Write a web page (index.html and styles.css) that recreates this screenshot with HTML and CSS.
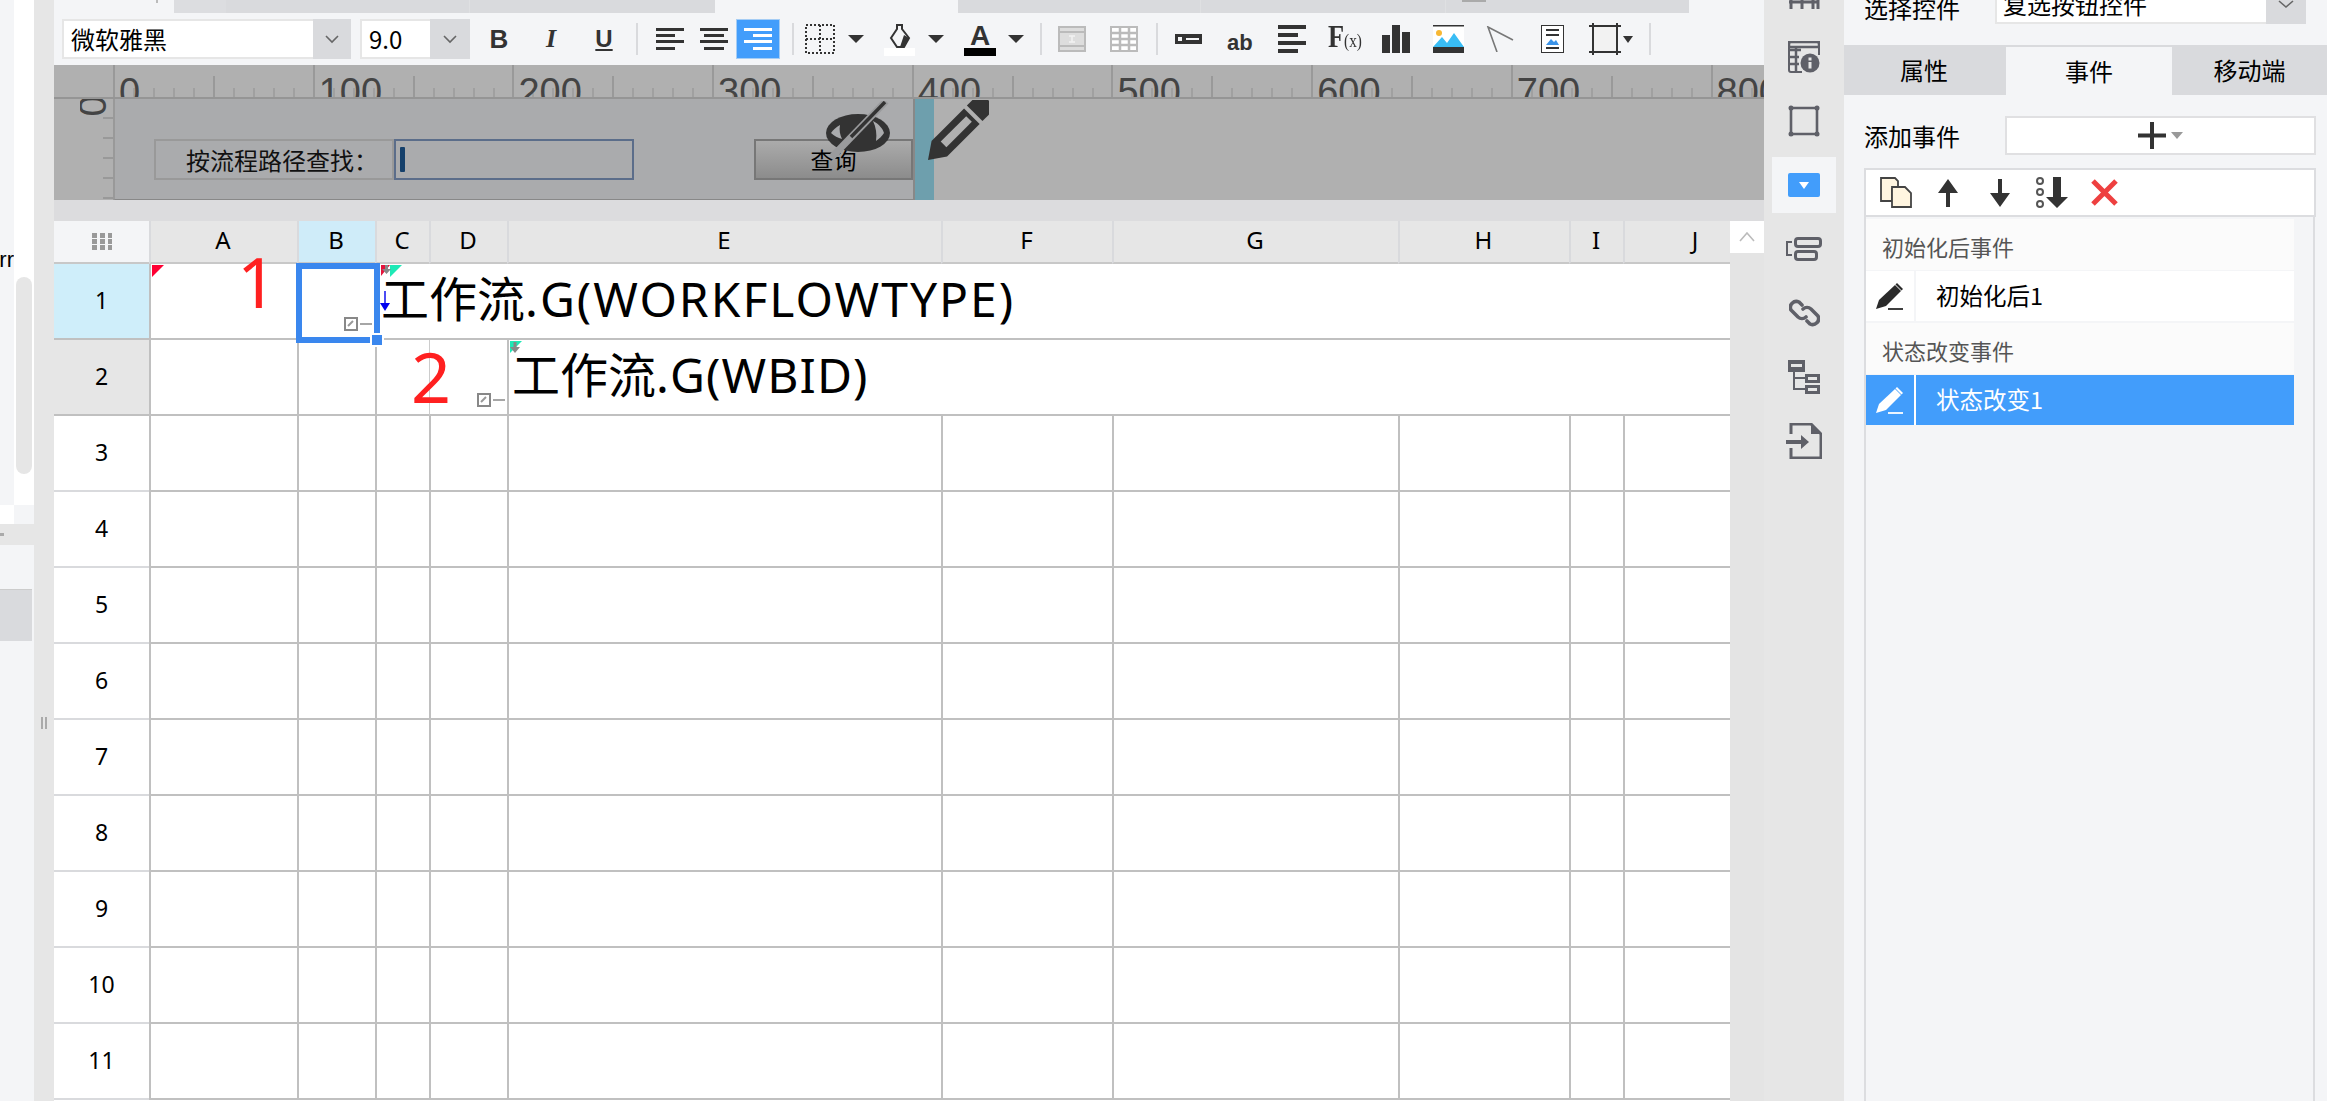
FILE: index.html
```html
<!DOCTYPE html>
<html lang="zh">
<head>
<meta charset="utf-8">
<title>报表设计器</title>
<link rel="stylesheet" href="styles.css">
</head>
<body>
<div class="app">
  <aside class="leftcol">
    <div class="leftpane">
      <div class="lp-top">
        <div class="lp-list"><span class="lp-text">rr</span></div>
        <div class="lp-scroll"><div class="lp-thumb"></div></div>
      </div>
      <div class="lp-mid"><div class="lp-mid-a"></div><div class="lp-mid-b"></div></div>
      <div class="lp-band"><span class="lp-dot"></span></div>
      <div class="lp-rest"><div class="lp-selected"></div></div>
    </div>
    <div class="splitter"><span class="grip"></span><span class="grip"></span></div>
  </aside>

  <main class="center">
    <div class="tabstrip">
      <span class="strip-tick"></span>
      <div class="tabgroup tg1"><span class="seg s1"></span><span class="seg s2"></span><span class="seg s3"></span></div>
      <div class="tabgroup tg2"><span class="seg s4"></span><span class="seg s5"></span><span class="seg s6"></span></div>
    </div>

    <div class="toolbar">
      <div class="select sel-font"><span class="sel-val">微软雅黑</span><span class="sel-arrow"><svg width="14" height="9" viewBox="0 0 14 9"><path d="M1 1l6 6 6-6" fill="none" stroke="#666" stroke-width="1.6"/></svg></span></div>
      <div class="select sel-size"><span class="sel-val">9.0</span><span class="sel-arrow"><svg width="14" height="9" viewBox="0 0 14 9"><path d="M1 1l6 6 6-6" fill="none" stroke="#666" stroke-width="1.6"/></svg></span></div>
      <span class="fmt fmt-b">B</span>
      <span class="fmt fmt-i">I</span>
      <span class="fmt fmt-u">U</span>
      <span class="sep sep-1"></span>
      <svg class="tic ml-18" width="28" height="22" viewBox="0 0 28 22"><path d="M0 0h28v3H0zM0 6h19v3H0zM0 12h28v3H0zM0 19h19v3H0z" fill="#333"/></svg>
      <svg class="tic ml-16" width="28" height="22" viewBox="0 0 28 22"><path d="M0 0h28v3H0zM4 6h20v3H4zM0 12h28v3H0zM4 19h20v3H4z" fill="#333"/></svg>
      <span class="align-active"><svg width="28" height="22" viewBox="0 0 28 22"><path d="M0 0h28v3H0zM9 6h19v3H9zM0 12h28v3H0zM9 19h19v3H9z" fill="#fff"/></svg></span>
      <span class="sep sep-2"></span>
      <svg class="tic ml-11" width="30" height="30" viewBox="0 0 30 30"><path d="M1 1h28v28H1zM1 15h28M15 1v28" fill="none" stroke="#333" stroke-width="2" stroke-dasharray="2 2"/></svg>
      <span class="caret ml-13"></span>
      <span class="fill ml-20"><svg width="22" height="24" viewBox="0 0 22 24"><path d="M8 1h5v4l7 9-5 9H8l-6-9 6-9z" fill="none" stroke="#333" stroke-width="2"/><path d="M15 11l5 3-5 9h-4z" fill="#333"/></svg><span class="swatch sw-white"></span></span>
      <span class="caret ml-13"></span>
      <span class="fill fill-a ml-20"><span class="a-glyph">A</span><span class="swatch sw-black"></span></span>
      <span class="caret ml-12"></span>
      <span class="sep sep-3"></span>
      <svg class="tic ml-16" width="28" height="26" viewBox="0 0 28 26"><rect x="1" y="1" width="26" height="24" fill="#ddd" stroke="#bbb" stroke-width="2"/><path d="M1 6h26M1 20h26" stroke="#bbb" stroke-width="2"/><path d="M11 10h6M11 16h6M14 10v6" stroke="#f2f2f2" stroke-width="1.5"/></svg>
      <svg class="tic ml-24" width="28" height="26" viewBox="0 0 28 26"><rect x="1" y="1" width="26" height="24" fill="#fff" stroke="#bbb" stroke-width="2"/><path d="M1 7h26M1 13h26M1 19h26M10 1v24M19 1v24" stroke="#bbb" stroke-width="2.5"/></svg>
      <span class="sep sep-4"></span>
      <svg class="tic ml-17" width="27" height="10" viewBox="0 0 27 10"><path d="M0 0h27v10H0z" fill="#333"/><path d="M3 3h4v4H3zM11 4h13v2H11z" fill="#f4f5f7"/></svg>
      <span class="ab ml-25">ab</span>
      <svg class="tic ml-25" width="28" height="28" viewBox="0 0 28 28"><path d="M0 0h28v4H0zM0 8h20v4H0zM0 16h28v4H0zM0 24h20v4H0z" fill="#333"/></svg>
      <span class="fx ml-22">F<small class="fx-x">(x)</small></span>
      <svg class="tic ml-21" width="28" height="28" viewBox="0 0 28 28"><path d="M0 10h8v18H0zM10 0h8v28h-8zM20 7h8v21h-8z" fill="#333"/></svg>
      <svg class="tic ml-23" width="31" height="28" viewBox="0 0 31 28"><path d="M0 0h31v28H0z" fill="#333"/><path d="M0 1.500h31V22H0z" fill="#fff"/><circle cx="6" cy="8" r="3" fill="#f7b733"/><path d="M0 22l9-10 5 6 7-10 10 14z" fill="#39bdf5"/></svg>
      <svg class="tic ml-22" width="28" height="26" viewBox="0 0 28 26"><path d="M27 14L2 1l9 25" fill="none" stroke="#777" stroke-width="1.600"/></svg>
      <svg class="tic ml-27" width="23" height="28" viewBox="0 0 23 28"><rect x=".5" y=".5" width="22" height="27" fill="#fff" stroke="#333"/><path d="M5 4h13v2H5zM5 9h13v2H5zM5 22h13v2H5z" fill="#333"/><path d="M5 20l5-6 3 3 2-2 3 5z" fill="#3b93e8"/></svg>
      <svg class="tic ml-25" width="32" height="32" viewBox="0 0 32 32"><path d="M4 3h24v26H4z" fill="#f2f2f2" stroke="#333" stroke-width="2"/><path d="M0 3h8M24 3h8M0 29h8M24 29h8M4 0v6M28 0v6M4 26v6M28 26v6" stroke="#333" stroke-width="2"/></svg>
      <span class="caret caret-sm"></span>
      <span class="sep sep-5"></span>
    </div>

    <section class="canvas">
      <div class="ruler">
        <span class="rcell"><b class="rnum">0</b></span><span class="rcell"><b class="rnum">100</b></span><span class="rcell"><b class="rnum">200</b></span><span class="rcell"><b class="rnum">300</b></span><span class="rcell"><b class="rnum">400</b></span><span class="rcell"><b class="rnum">500</b></span><span class="rcell"><b class="rnum">600</b></span><span class="rcell"><b class="rnum">700</b></span><span class="rcell"><b class="rnum">800</b></span>
      </div>
      <div class="stage">
        <div class="vruler"><span class="vnum">0</span></div>
        <div class="design">
          <div class="formlabel">按流程路径查找：</div>
          <div class="forminput"><span class="input-caret"></span></div>
          <div class="formbtn">查询</div>
          <svg class="eye" width="64" height="58" viewBox="0 0 64 58"><ellipse cx="32" cy="32" rx="32" ry="19" fill="#333"/><path d="M5 32c2-3 5-6 9-8-1 5 0 10 2 14-4-1-8-3-11-6z" fill="#aaabad"/><path d="M47 20c6 3 10 8 11 12-2 3-5 6-8 8 1-7 0-14-3-20z" fill="#aaabad"/><path d="M60 0L6 56" stroke="#9a9b9d" stroke-width="7"/><path d="M59 1L25 36" stroke="#333" stroke-width="3.500"/></svg>
        </div>
        <div class="teal"></div>
        <svg class="pencil" width="62" height="62" viewBox="0 0 62 62"><g transform="translate(1 60) rotate(-45)"><path d="M0 0l16-11h46v22H16z" fill="#333"/><path d="M22-4h36v8H22z" fill="#b0b0b0"/><path d="M66-11h8a11 11 0 010 22h-8z" fill="#333"/></g></svg>
      </div>
    </section>

    <div class="gapbar"></div>

    <section class="sheetwrap">
      <div class="sheet">
        <div class="corner"><span class="cgrip"></span></div>
        <div class="ch">A</div><div class="ch ch-on">B</div><div class="ch">C</div><div class="ch">D</div><div class="ch">E</div><div class="ch">F</div><div class="ch">G</div><div class="ch">H</div><div class="ch">I</div><div class="ch">J</div>

        <div class="rh rh-on">1</div><div class="c"></div><div class="c"></div>
        <div class="c span8"><span class="bigtext t-c1">工作流<span class="lat-1">.G(WORKFLOWTYPE)</span></span></div>

        <div class="rh rh-two">2</div><div class="c"></div><div class="c"></div><div class="c"></div><div class="c c-thin"></div>
        <div class="c span6"><span class="bigtext t-e2">工作流<span class="lat-2">.G(WBID)</span></span></div>

        <div class="rh">3</div><div class="c"></div><div class="c"></div><div class="c"></div><div class="c"></div><div class="c"></div><div class="c"></div><div class="c"></div><div class="c"></div><div class="c"></div><div class="c"></div>
        <div class="rh">4</div><div class="c"></div><div class="c"></div><div class="c"></div><div class="c"></div><div class="c"></div><div class="c"></div><div class="c"></div><div class="c"></div><div class="c"></div><div class="c"></div>
        <div class="rh">5</div><div class="c"></div><div class="c"></div><div class="c"></div><div class="c"></div><div class="c"></div><div class="c"></div><div class="c"></div><div class="c"></div><div class="c"></div><div class="c"></div>
        <div class="rh">6</div><div class="c"></div><div class="c"></div><div class="c"></div><div class="c"></div><div class="c"></div><div class="c"></div><div class="c"></div><div class="c"></div><div class="c"></div><div class="c"></div>
        <div class="rh">7</div><div class="c"></div><div class="c"></div><div class="c"></div><div class="c"></div><div class="c"></div><div class="c"></div><div class="c"></div><div class="c"></div><div class="c"></div><div class="c"></div>
        <div class="rh">8</div><div class="c"></div><div class="c"></div><div class="c"></div><div class="c"></div><div class="c"></div><div class="c"></div><div class="c"></div><div class="c"></div><div class="c"></div><div class="c"></div>
        <div class="rh">9</div><div class="c"></div><div class="c"></div><div class="c"></div><div class="c"></div><div class="c"></div><div class="c"></div><div class="c"></div><div class="c"></div><div class="c"></div><div class="c"></div>
        <div class="rh">10</div><div class="c"></div><div class="c"></div><div class="c"></div><div class="c"></div><div class="c"></div><div class="c"></div><div class="c"></div><div class="c"></div><div class="c"></div><div class="c"></div>
        <div class="rh">11</div><div class="c"></div><div class="c"></div><div class="c"></div><div class="c"></div><div class="c"></div><div class="c"></div><div class="c"></div><div class="c"></div><div class="c"></div><div class="c"></div>

        <span class="tri tri-red t1"></span>
        <span class="tri tri-crimson t2"></span>
        <span class="tri tri-teal t3"></span>
        <span class="tri tri-teal t4"></span>
        <svg class="minidown d1" width="9" height="9" viewBox="0 0 9 9"><path d="M3 0h3v4h3L4.500 9 0 4h3z" fill="#888"/></svg>
        <svg class="minidown d2" width="10" height="11" viewBox="0 0 10 11"><path d="M3.500 0h3v5H10l-5 6-5-6h3.500z" fill="#888"/></svg>
        <svg class="bluearrow" width="10" height="20" viewBox="0 0 10 20"><path d="M4.300 0h1.400v12H10l-5 8-5-8h4.300z" fill="#0000ee"/></svg>
        <span class="mark mark-1">1</span>
        <span class="mark mark-2">2</span>
        <span class="chk chk-1"><svg width="28" height="14" viewBox="0 0 28 14"><rect x="1" y="1" width="12" height="12" fill="#fff" stroke="#888" stroke-width="2"/><path d="M4 9l5-5" stroke="#999" stroke-width="2"/><path d="M16 7h13" stroke="#888" stroke-width="1.500"/></svg></span>
        <span class="chk chk-2"><svg width="28" height="14" viewBox="0 0 28 14"><rect x="1" y="1" width="12" height="12" fill="#fff" stroke="#888" stroke-width="2"/><path d="M4 9l5-5" stroke="#999" stroke-width="2"/><path d="M16 7h13" stroke="#888" stroke-width="1.500"/></svg></span>
        <div class="selbox"></div>
        <div class="selhandle"></div>
      </div>
      <div class="vscroll">
        <div class="vs-up"><svg width="16" height="10" viewBox="0 0 16 10"><path d="M1 9l7-8 7 8" fill="none" stroke="#bbb" stroke-width="1.600"/></svg></div>
      </div>
    </section>
  </main>

  <nav class="sidebar">
    <div class="side-i"><svg width="32" height="32" viewBox="0 0 32 32"><path d="M3 20v12M14 20v12M25 20v12M30 20v12M1 25h30" stroke="#5f6068" stroke-width="3" fill="none"/></svg></div>
    <div class="side-i"><svg width="32" height="32" viewBox="0 0 32 32"><path d="M14 31H3a2 2 0 01-2-2V3a2 2 0 012-2h26a2 2 0 012 2v11" fill="none" stroke="#5f6068" stroke-width="2"/><path d="M1 1h30v5H1zM1 9h12M1 16h10M1 23h10M8 6v25" fill="none" stroke="#5f6068" stroke-width="2.500"/><circle cx="22" cy="22" r="9.500" fill="#5f6068"/><path d="M20.500 16.500h3v3h-3zM20.500 21h3v6.500h-3z" fill="#e6e6e6"/></svg></div>
    <div class="side-i"><svg width="32" height="32" viewBox="0 0 32 32"><path d="M3 3h26v26H3z" fill="none" stroke="#5f6068" stroke-width="2.600"/><circle cx="3" cy="3" r="2.500" fill="#5f6068"/><circle cx="29" cy="3" r="2.500" fill="#5f6068"/><circle cx="3" cy="29" r="2.500" fill="#5f6068"/><circle cx="29" cy="29" r="2.500" fill="#5f6068"/></svg></div>
    <div class="side-i side-on"><span class="blue-dd"><span class="blue-tri"></span></span></div>
    <div class="side-i"><svg width="36" height="24" viewBox="0 0 36 24"><path d="M6 5H1v13h5" fill="none" stroke="#5f6068" stroke-width="2"/><rect x="9.500" y="1.500" width="25" height="8" rx="2.500" fill="none" stroke="#5f6068" stroke-width="3"/><rect x="9.500" y="14.500" width="21" height="8" rx="2.500" fill="none" stroke="#5f6068" stroke-width="3"/></svg></div>
    <div class="side-i"><svg width="31" height="32" viewBox="0 0 31 32"><path d="M13 8l-3-3a6 6 0 00-8 8l7 7a6 6 0 008 0M18 24l3 3a6 6 0 008-8l-7-7a6 6 0 00-8 0" fill="none" stroke="#5f6068" stroke-width="3.600" stroke-linecap="round"/></svg></div>
    <div class="side-i"><svg width="32" height="34" viewBox="0 0 32 34"><path d="M0 0h17v12H0zM17 14h15v9H17zM17 25h15v9H17z" fill="#5f6068"/><path d="M3 4h11v3H3zM20 17h9v3h-9zM20 28h9v3h-9z" fill="#e6e6e6"/><path d="M6 12v17h11M6 18h11" stroke="#5f6068" stroke-width="2" fill="none"/></svg></div>
    <div class="side-i"><svg width="36" height="36" viewBox="0 0 36 36"><path d="M5 11V1h20l10 10v24H5V25" fill="none" stroke="#5f6068" stroke-width="3"/><path d="M25 1v10h10z" fill="#5f6068"/><path d="M0 17h15v-5l8 7-8 7v-5H0z" fill="#5f6068"/></svg></div>
  </nav>

  <aside class="panel">
    <div class="p-select">
      <span class="p-label">选择控件</span>
      <div class="select sel-ctrl"><span class="sel-val">复选按钮控件</span><span class="sel-arrow arrow-low"><svg width="16" height="9" viewBox="0 0 16 9"><path d="M1 1l7 6 7-6" fill="none" stroke="#666" stroke-width="1.600"/></svg></span></div>
    </div>
    <div class="p-tabs">
      <div class="p-tab p-t1">属性</div>
      <div class="p-tab p-t2 p-tab-on">事件</div>
      <div class="p-tab p-t3">移动端</div>
    </div>
    <div class="p-add">
      <span class="p-label">添加事件</span>
      <div class="addbtn"><svg width="28" height="27" viewBox="0 0 28 27"><path d="M12 0h4v11.500h12v4H16V27h-4V15.500H0v-4h12z" fill="#333"/></svg><span class="add-caret"></span></div>
    </div>
    <div class="p-tools">
      <svg class="pt-copy" width="32" height="31" viewBox="0 0 32 31"><path d="M1 1h14l3 3v8h-6v12H1z" fill="#fff5e0" stroke="#444" stroke-width="1.800"/><path d="M12 10h13l6 6v14H12z" fill="#fff5e0" stroke="#444" stroke-width="1.800"/></svg>
      <svg class="pt-up" width="20" height="28" viewBox="0 0 20 28"><path d="M10 0l10 14h-8v14H8V14H0z" fill="#333"/></svg>
      <svg class="pt-down" width="20" height="28" viewBox="0 0 20 28"><path d="M10 28L0 14h8V0h4v14h8z" fill="#333"/></svg>
      <svg class="pt-dots" width="32" height="31" viewBox="0 0 32 31"><circle cx="4" cy="4" r="3" fill="none" stroke="#555" stroke-width="2"/><circle cx="4" cy="15" r="3" fill="none" stroke="#555" stroke-width="2"/><circle cx="4" cy="27" r="3" fill="none" stroke="#555" stroke-width="2"/><path d="M21 31L10 20h7V0h8v20h7z" fill="#333"/></svg>
      <svg class="pt-x" width="27" height="27" viewBox="0 0 27 27"><path d="M2 2l23 23M25 2L2 25" stroke="#ee4040" stroke-width="5"/></svg>
    </div>
    <div class="p-list">
      <div class="ev-sec">初始化后事件</div>
      <div class="ev-item">
        <span class="ev-ic"><svg width="28" height="28" viewBox="0 0 28 28"><path d="M0 27l3-9L19 3l6 6L10 24z" fill="#2a2a2a"/><path d="M21 1l6 6-1.500 1.500-6-6z" fill="#2a2a2a"/><path d="M12 27h15" stroke="#2a2a2a" stroke-width="1.800"/></svg></span>
        <span class="ev-name">初始化后1</span>
      </div>
      <div class="ev-sec ev-sec2">状态改变事件</div>
      <div class="ev-item ev-on">
        <span class="ev-ic"><svg width="28" height="28" viewBox="0 0 28 28"><path d="M0 27l3-9L19 3l6 6L10 24z" fill="#fff"/><path d="M21 1l6 6-1.500 1.500-6-6z" fill="#fff"/><path d="M12 27h15" stroke="#fff" stroke-width="1.800"/></svg></span>
        <span class="ev-name">状态改变1</span>
      </div>
    </div>
  </aside>
</div>
</body>
</html>
```

FILE: styles.css
```css
* { box-sizing: border-box; }
html, body { margin: 0; padding: 0; height: 100%; overflow: hidden; background: #f4f5f7; }
body { font-family: "Noto Sans", "Noto Sans CJK SC", sans-serif; color: #000; }

.app { display: flex; width: 2327px; height: 1101px; overflow: hidden; }

/* left column */
.leftcol { display: flex; flex: none; width: 54px; }
.leftpane { width: 34px; display: flex; flex-direction: column; background: #f4f5f7; }
.lp-top { display: flex; height: 505px; }
.lp-list { width: 14px; overflow: hidden; display: flex; justify-content: flex-end; padding-top: 245px; }
.lp-text { font: 22px/30px "Liberation Sans", sans-serif; white-space: nowrap; }
.lp-scroll { width: 20px; background: #fff; padding: 277px 2px 0; }
.lp-thumb { width: 16px; height: 197px; background: #e6e6e6; border-radius: 8px; }
.lp-mid { display: flex; height: 19px; }
.lp-mid-a { width: 14px; background: #fff; }
.lp-mid-b { flex: 1; background: #f4f5f7; }
.lp-band { height: 21px; background: #e6e6e6; display: flex; align-items: center; }
.lp-dot { width: 4px; height: 3px; background: #aaa; }
.lp-rest { flex: 1; padding-top: 44px; }
.lp-selected { width: 32px; height: 52px; background: #d9dadd; border-top: 1px solid #ccc; }
.splitter { width: 20px; background: #e6e6e6; display: flex; justify-content: center; gap: 2px; padding-top: 717px; }
.grip { width: 2px; height: 12px; background: #aaa; }

/* centre */
.center { width: 1710px; flex: none; display: flex; flex-direction: column; }
.tabstrip { height: 13px; display: flex; background: #f4f5f7; }
.strip-tick { width: 2px; height: 3px; margin: 0 16px 0 102px; background: #bbb; flex: none; }
.tabgroup { display: flex; height: 13px; }
.tg1 { width: 541px; }
.tg2 { width: 731px; margin-left: 243px; }
.seg { display: block; height: 13px; background: #d9dadd; }
.s1 { width: 52px; background: #dcdde0; }
.s2 { width: 244px; border-right: 1px solid #dfe0e2; }
.s3 { width: 245px; }
.s4 { width: 243px; border-right: 1px solid #dfe0e2; }
.s5 { width: 245px; border-right: 1px solid #dfe0e2; }
.s6 { width: 243px; background: linear-gradient(#aaa, #aaa) 16px 0 / 24px 2px no-repeat, #d9dadd; }

.toolbar { height: 52px; background: #f4f5f7; display: flex; align-items: center; padding-left: 8px; flex: none; }
.select { display: flex; height: 40px; background: #fff; border: 2px solid #e6e6e6; border-right: 0; font-size: 24px; line-height: 36px; }
.sel-val { flex: 1; padding-left: 7px; white-space: nowrap; overflow: hidden; font-family: "Noto Sans CJK SC", sans-serif; }
.sel-arrow { width: 38px; flex: none; margin: -2px 0; background: #d9dadd; display: flex; align-items: center; justify-content: center; }
.sel-font { width: 289px; }
.sel-size { width: 110px; margin-left: 9px; }
.sel-size .sel-arrow { width: 40px; }
.sel-size .sel-val { padding-left: 7px; }

.fmt { width: 52px; text-align: center; font: 26px/30px "Liberation Sans", sans-serif; color: #333; flex: none; }
.fmt-b { margin-left: 3px; font-weight: 700; }
.fmt-i { font-style: italic; font-family: "Liberation Serif", serif; font-weight: 700; }
.fmt-u { margin-left: 1px; font-size: 24px; font-weight: 700; text-decoration: underline; text-decoration-thickness: 2px; text-underline-offset: 2px; }
.sep { width: 2px; height: 32px; background: #d9dadd; flex: none; }
.sep-1 { margin-left: 6px; }
.sep-2 { margin-left: 12px; }
.sep-3 { margin-left: 16px; }
.sep-4 { margin-left: 18px; }
.sep-5 { margin-left: 16px; }
.tic { flex: none; display: block; }
.ml-11 { margin-left: 11px; }
.ml-12 { margin-left: 12px; }
.ml-13 { margin-left: 13px; }
.ml-16 { margin-left: 16px; }
.ml-17 { margin-left: 17px; }
.ml-18 { margin-left: 18px; }
.ml-20 { margin-left: 20px; }
.ml-21 { margin-left: 21px; }
.ml-22 { margin-left: 22px; }
.ml-23 { margin-left: 23px; }
.ml-24 { margin-left: 24px; }
.ml-25 { margin-left: 25px; }
.ml-27 { margin-left: 27px; }
.align-active { width: 44px; height: 40px; margin-left: 8px; background: #429dfb; border: 1px solid #a5cdf5; display: flex; align-items: center; justify-content: center; flex: none; }
.caret { width: 0; height: 0; border-left: 8px solid transparent; border-right: 8px solid transparent; border-top: 8px solid #333; flex: none; }
.caret-sm { border-left-width: 5px; border-right-width: 5px; border-top-width: 7px; margin-left: 2px; }
.fill { width: 31px; height: 33px; flex: none; display: flex; flex-direction: column; align-items: center; margin-top: 3px; }
.fill-a { width: 32px; }
.fill svg { display: block; }
.swatch { width: 100%; height: 8px; flex: none; }
.sw-white { background: #fff; }
.sw-black { background: #000; }
.a-glyph { font: 700 28px/24px "Liberation Sans", sans-serif; height: 24px; color: #333; }
.ab { font: 700 22px/26px "Liberation Sans", sans-serif; color: #333; flex: none; margin-top: 8px; width: 26px; }
.fx { font: 700 31px/30px "Liberation Serif", serif; color: #333; flex: none; width: 33px; white-space: nowrap; transform: scaleX(.85); transform-origin: left; }
.fx-x { font-size: 18px; font-weight: 400; }

/* canvas */
.canvas { height: 135px; flex: none; background: #b0b0b0; display: flex; flex-direction: column; overflow: hidden; }
.ruler { height: 34px; flex: none; display: flex; padding-left: 59px; border-bottom: 2px solid #959595; overflow: hidden; }
.rcell {
  width: 199.700px; flex: none; height: 32px; overflow: hidden; padding-left: 6px;
  background:
    linear-gradient(#999, #999) 0 0 / 2px 100% no-repeat,
    linear-gradient(#999, #999) 100px 11px / 2px 100% no-repeat,
    repeating-linear-gradient(90deg, #a0a0a0 0 2px, transparent 2px 20px) 0 100% / 100% 9px no-repeat;
}
.rnum { display: block; font: 400 38px/38px "Liberation Sans", sans-serif; color: #444; margin-top: 8px; white-space: nowrap; }
.stage { flex: 1; display: flex; position: relative; padding-left: 26px; }
.vruler { width: 33px; flex: none; height: 101px; overflow: hidden; background: repeating-linear-gradient(180deg, transparent 0 18px, #999 18px 20px) 23px 0 / 10px 100% no-repeat; }
.vnum { display: block; font: 38px/26px "Liberation Sans", sans-serif; color: #444; width: 26px; text-align: center; transform: rotate(-90deg); margin-top: -6px; }
.design { width: 802px; flex: none; position: relative; background: #aaabad; border-left: 2px solid #999; border-bottom: 2px solid #888; border-right: 2px solid #888; display: flex; padding: 40px 0 0 39px; height: 102px; }
.formlabel { width: 240px; height: 41px; border: 2px solid #999; font: 24px/37px "Noto Sans CJK SC", sans-serif; text-align: center; padding-left: 16px; color: #111; flex: none; white-space: nowrap; overflow: hidden; }
.forminput { width: 240px; height: 41px; border: 2px solid #5b6d8a; flex: none; padding: 6px 0 0 4px; }
.input-caret { display: block; width: 5px; height: 25px; background: #15406b; border-radius: 1px; }
.formbtn { width: 159px; height: 41px; margin-left: 120px; border: 2px solid #777; background: linear-gradient(#ababab, #8c8c8c); font: 23px/36px "Noto Sans CJK SC", sans-serif; text-align: center; flex: none; }
.eye { position: absolute; left: 711px; top: 2px; }
.teal { width: 19px; flex: none; background: #6e9fad; height: 102px; }
.pencil { position: absolute; left: 873px; top: 1px; }

.gapbar { height: 21px; flex: none; background: #dcdcde; }

/* sheet */
.sheetwrap { flex: 1; display: flex; min-height: 0; overflow: hidden; }
.sheet {
  position: relative; width: 1676px; flex: none; display: grid; background: #fff; align-content: start;
  grid-template-columns: 95px 148px 78px 54px 78px 434px 171px 286px 171px 54px 144px;
  grid-auto-rows: 76px; grid-template-rows: 43px repeat(11, 76px);
  overflow: hidden;
}
.corner { background: #f4f5f7; border-bottom: 2px solid #c8c8c8; display: flex; align-items: center; justify-content: center; }
.cgrip { width: 20px; height: 17px; background:
  repeating-linear-gradient(90deg, #999 0 5px, transparent 5px 8px),
  none; -webkit-mask: repeating-linear-gradient(180deg, #000 0 5px, transparent 5px 6px); mask: repeating-linear-gradient(180deg, #000 0 5px, transparent 5px 6px); }
.ch { background: #e6e6e6; border-left: 2px solid #d9dadd; border-bottom: 2px solid #c8c8c8; font: 24px/38px "Noto Sans", sans-serif; text-align: center; padding-right: 2px; }
.ch-on { background: #cfecf9; }
.rh { font: 23px/72px "Noto Sans", sans-serif; text-align: center; background: #fff; border-bottom: 2px solid #d9dadd; }
.rh-on { background: #cfeefa; border-bottom-color: #c0c0c0; }
.rh-two { background: #e6e6e6; border-bottom-color: #c0c0c0; }
.c { border-left: 2px solid #c0c0c0; border-bottom: 2px solid #c0c0c0; background: #fff; min-width: 0; }
.c-thin { border-left: 1px solid #ccc; }
.span8 { grid-column: span 8; }
.span6 { grid-column: span 6; }
.bigtext { display: block; font: 48px/70px "Noto Sans", "Noto Sans CJK SC", sans-serif; white-space: nowrap; }
.t-c1 { padding-left: 4px; }
.t-e2 { padding-left: 3px; }
.lat-1 { letter-spacing: 2px; }
.lat-2 { letter-spacing: 1.100px; }

.tri { position: absolute; width: 0; height: 0; border-style: solid; border-width: 12px 12px 0 0; }
.tri-red { border-color: #ff0033 transparent transparent transparent; }
.tri-crimson { border-color: #e5143c transparent transparent transparent; border-width: 11px 9px 0 0; }
.tri-teal { border-color: #1de9b6 transparent transparent transparent; }
.t1 { left: 98px; top: 44px; }
.t2 { left: 327px; top: 44px; }
.t3 { left: 336px; top: 44px; }
.t4 { left: 456px; top: 120px; }
.minidown { position: absolute; }
.d1 { left: 328px; top: 44px; }
.d2 { left: 456px; top: 121px; }
.bluearrow { position: absolute; left: 326px; top: 70px; }
.mark { position: absolute; font: 400 70px/80px "Noto Sans", sans-serif; color: #ff2020; }
.mark-1 { left: 183px; top: 20px; }
.mark-2 { left: 357px; top: 115px; }
.chk { position: absolute; display: block; line-height: 0; }
.chk-1 { left: 290px; top: 96px; }
.chk-2 { left: 423px; top: 172px; }
.selbox { position: absolute; left: 242px; top: 42px; width: 84px; height: 80px; border: 6px solid #3a87ee; }
.selhandle { position: absolute; left: 316px; top: 112px; width: 14px; height: 14px; background: #3a87ee; border: 2px solid #fff; }

.vscroll { flex: 1; background: #e4e4e4; }
.vs-up { height: 32px; background: #fff; display: flex; align-items: center; justify-content: center; }

/* sidebar */
.sidebar { width: 80px; flex: none; background: #e6e6e6; display: flex; flex-direction: column; align-items: center; margin-top: -39px; height: 1140px; }
.side-i { width: 64px; height: 64px; flex: none; display: flex; align-items: center; justify-content: center; }
.side-on { height: 56px; margin: 4px 0; background: #f4f5f7; }
.blue-dd { width: 32px; height: 24px; background: #429dfb; border-radius: 2px; display: flex; align-items: center; justify-content: center; }
.blue-tri { width: 0; height: 0; border-left: 5px solid transparent; border-right: 5px solid transparent; border-top: 7px solid #fff; }

/* right panel */
.panel { width: 483px; flex: none; background: #f4f5f7; display: flex; flex-direction: column; }
.p-label { font: 24px/36px "Noto Sans CJK SC", sans-serif; flex: none; }
.p-select { height: 45px; flex: none; display: flex; align-items: flex-start; padding-left: 20px; }
.p-select .p-label { margin-top: -10px; }
.sel-ctrl { width: 311px; margin-left: 35px; margin-top: -16px; flex: none; }
.sel-ctrl .sel-val { padding-left: 6px; }
.sel-ctrl .sel-arrow { width: 40px; margin-bottom: -2px; }
.p-tabs { height: 50px; flex: none; display: flex; background: #d9dadd; }
.p-tab { font: 24px/50px "Noto Sans CJK SC", sans-serif; text-align: center; flex: none; }
.p-t1 { width: 160px; margin-right: 2px; }
.p-t2 { width: 166px; }
.p-t3 { width: 155px; }
.p-tab-on { background: #f4f5f7; margin-top: 2px; line-height: 48px; }
.p-add { display: flex; align-items: center; margin-top: 21px; padding-left: 20px; height: 39px; flex: none; }
.addbtn { width: 311px; height: 39px; margin-left: 45px; background: #fff; border: 2px solid #e0e0e2; display: flex; align-items: center; justify-content: center; flex: none; }
.add-caret { width: 0; height: 0; margin-left: 5px; border-left: 6px solid transparent; border-right: 6px solid transparent; border-top: 7px solid #999; }
.p-tools { margin: 13px 11px 0 20px; height: 49px; flex: none; background: #fff; border: 2px solid #dcdde0; display: flex; align-items: center; }
.p-tools svg { display: block; flex: none; }
.pt-copy { margin-left: 14px; }
.pt-up { margin-left: 26px; }
.pt-down { margin-left: 32px; }
.pt-dots { margin-left: 26px; }
.pt-x { margin-left: 23px; }
.p-list { flex: 1; margin: 0 12px 0 20px; border-left: 2px solid #dcdde0; border-right: 2px solid #dcdde0; padding: 2px 19px 0 0; }
.ev-sec { height: 51px; background: #fbfbfb; font: 22px/54px "Noto Sans CJK SC", sans-serif; color: #555; padding-left: 16px; margin-bottom: 1px; }
.ev-sec2 { margin-top: 2px; }
.ev-item { height: 50px; display: flex; background: #f4f5f7; }
.ev-ic { width: 48px; flex: none; display: flex; align-items: center; justify-content: center; background: #fff; }
.ev-name { flex: 1; margin-left: 2px; padding-left: 20px; font: 23.500px/48px "Noto Sans CJK SC", sans-serif; background: #fff; }
.ev-on { background: #fff; }
.ev-on .ev-ic, .ev-on .ev-name { background: #429dfb; color: #fff; }
```
